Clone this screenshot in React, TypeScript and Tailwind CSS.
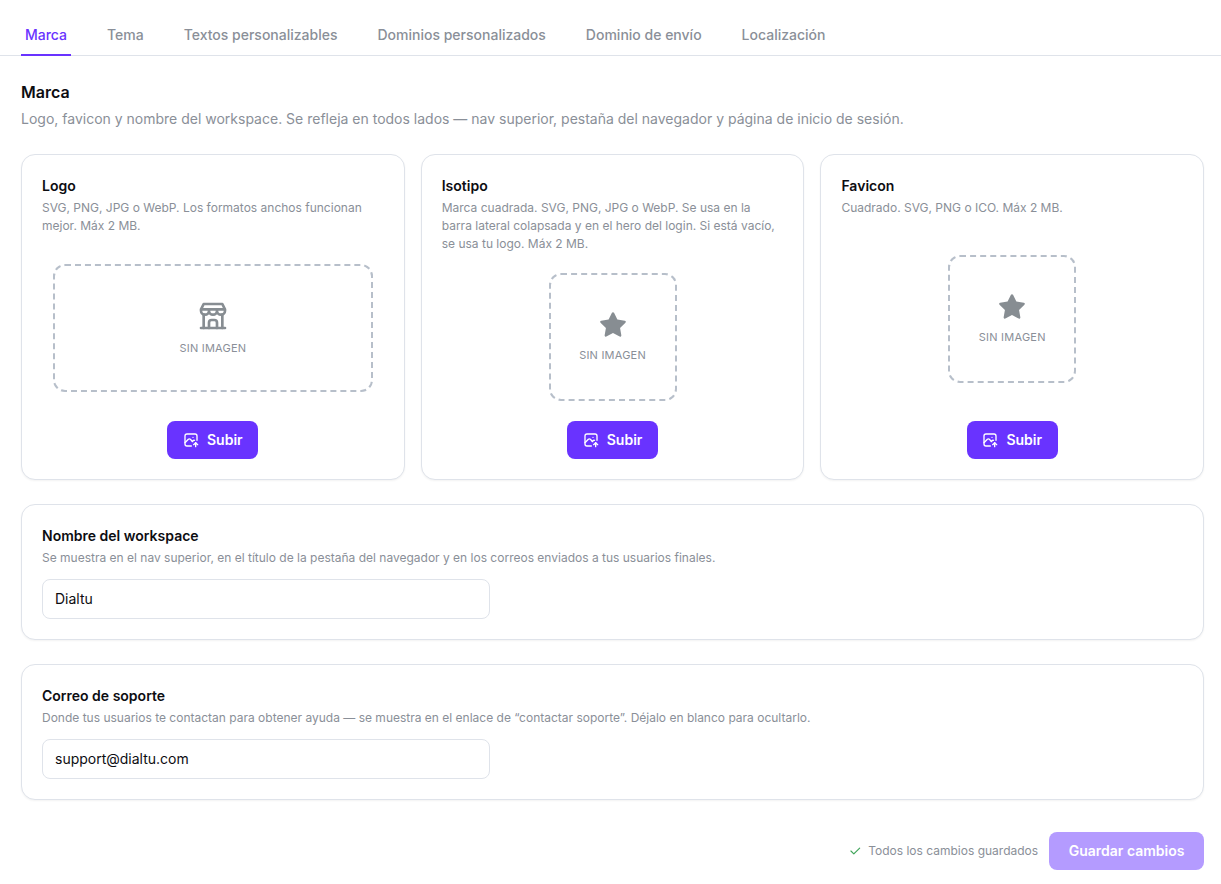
import { TbBuildingStore, TbCheck, TbPhotoUp, TbStarFilled } from "react-icons/tb";

const tabs = [
  "Marca",
  "Tema",
  "Textos personalizables",
  "Dominios personalizados",
  "Dominio de envío",
  "Localización",
];

function UploadCard({
  title,
  desc,
  wide,
  icon,
}: {
  title: string;
  desc: string;
  wide?: boolean;
  icon: React.ReactNode;
}) {
  return (
    <div className="flex flex-col rounded-[14px] border border-[#dfe3ea] bg-white p-5 shadow-xs">
      <div className="mt-px text-sm leading-5 font-semibold text-[#0d0d12]">{title}</div>
      <p className="mt-[3px] text-xs leading-[18px] text-[#8a8f98]">{desc}</p>
      <div className="flex flex-1 items-center justify-center py-5">
        <div
          className={`flex h-32 shrink-0 flex-col items-center justify-center gap-2 rounded-xl border-2 border-dashed border-[#b7bfca] ${wide ? "w-80" : "w-32"}`}
        >
          {icon}
          <span className="text-[11px] leading-4 tracking-[0.02em] text-[#8a8f98]">SIN IMAGEN</span>
        </div>
      </div>
      <button
        type="button"
        className="mx-auto flex h-[38px] w-[91px] items-center justify-center gap-2 rounded-lg bg-[#6933ff] text-sm font-semibold text-white"
      >
        <TbPhotoUp size={16} />
        Subir
      </button>
    </div>
  );
}

function FieldCard({ title, desc, value }: { title: string; desc: string; value: string }) {
  return (
    <div className="rounded-[14px] border border-[#dfe3ea] bg-white p-5 shadow-xs">
      <div className="mt-px text-sm leading-5 font-semibold text-[#0d0d12]">{title}</div>
      <p className="mt-[3px] text-xs leading-[18px] text-[#8a8f98]">{desc}</p>
      <input
        readOnly
        value={value}
        className="mt-3 block h-10 w-[448px] rounded-lg border border-[#dfe3ea] bg-white px-3 pb-0.5 text-sm text-[#0d0d12] outline-none"
      />
    </div>
  );
}

export default function App() {
  return (
    <div className="min-h-[884px] bg-white font-['Inter',sans-serif]">
      <div className="flex h-14 items-end gap-8 border-b border-[#dfe3ea] pl-[21px]">
        {tabs.map((tab, i) => (
          <div
            key={tab}
            className={`-mb-px flex h-[41px] items-center border-b-2 px-1 text-sm font-medium ${
              i === 0 ? "border-[#6933ff] text-[#6933ff]" : "border-transparent text-[#8a8f98]"
            }`}
          >
            {tab}
          </div>
        ))}
      </div>

      <div className="pt-6 pr-[16.9px] pl-[21px]">
        <h1 className="text-base leading-6 font-semibold text-[#0d0d12]">Marca</h1>
        <p className="mt-[5px] text-sm leading-5 text-[#8a8f98]">
          Logo, favicon y nombre del workspace. Se refleja en todos lados — nav superior, pestaña del navegador y página de inicio de sesión.
        </p>

        <div className="mt-[25px] grid grid-cols-3 gap-4">
          <UploadCard
            title="Logo"
            desc="SVG, PNG, JPG o WebP. Los formatos anchos funcionan mejor. Máx 2 MB."
            wide
            icon={<TbBuildingStore size={32} className="text-[#878d92]" />}
          />
          <UploadCard
            title="Isotipo"
            desc="Marca cuadrada. SVG, PNG, JPG o WebP. Se usa en la barra lateral colapsada y en el hero del login. Si está vacío, se usa tu logo. Máx 2 MB."
            icon={<TbStarFilled size={28} className="text-[#878d92]" />}
          />
          <UploadCard
            title="Favicon"
            desc="Cuadrado. SVG, PNG o ICO. Máx 2 MB."
            icon={<TbStarFilled size={28} className="text-[#878d92]" />}
          />
        </div>

        <div className="mt-6 flex flex-col gap-6">
          <FieldCard
            title="Nombre del workspace"
            desc="Se muestra en el nav superior, en el título de la pestaña del navegador y en los correos enviados a tus usuarios finales."
            value="Dialtu"
          />
          <FieldCard
            title="Correo de soporte"
            desc="Donde tus usuarios te contactan para obtener ayuda — se muestra en el enlace de “contactar soporte”. Déjalo en blanco para ocultarlo."
            value="support@dialtu.com"
          />
        </div>

        <div className="mt-8 flex items-center justify-end gap-[11px]">
          <div className="flex items-center gap-1.5 text-xs text-[#8a8f98]">
            <TbCheck size={14} className="text-[#40a55a]" />
            Todos los cambios guardados
          </div>
          <button
            type="button"
            className="h-[38px] w-[155px] rounded-lg bg-[#b49bff] text-sm font-semibold text-white"
          >
            Guardar cambios
          </button>
        </div>
      </div>
    </div>
  );
}
